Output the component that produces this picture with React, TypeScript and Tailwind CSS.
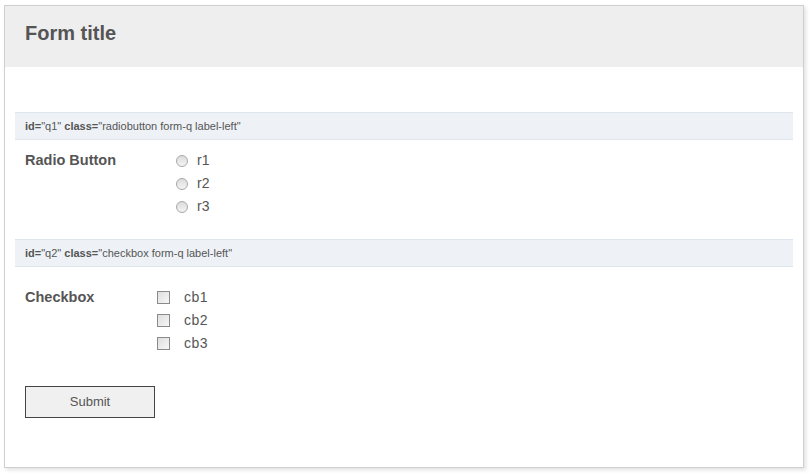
import React from "react";

function Radio() {
  return (
    <span className="w-[12px] h-[12px] rounded-full border border-[#a8a8a8] bg-gradient-to-b from-[#dcdcdc] to-[#f4f4f4] shrink-0" />
  );
}

function Box() {
  return (
    <span className="w-[13px] h-[13px] border border-[#8a8a8a] bg-gradient-to-br from-[#dedede] to-[#f7f7f7] shrink-0" />
  );
}

function Bar({ id, cls }: { id: string; cls: string }) {
  return (
    <div className="h-[28px] border-y border-[#dde6ee] bg-[#eef2f6] px-[10px] flex items-center text-[11px] text-[#555]">
      <b>id=</b>"{id}"&nbsp;<b>class=</b>"{cls}"
    </div>
  );
}

export default function App() {
  return (
    <div
      className="w-[809px] h-[474px] bg-white pt-[5px] pl-[4px]"
      style={{ fontFamily: '"Liberation Sans", Arial, sans-serif' }}
    >
      <div className="w-[800px] h-[463px] border border-[#cfcfcf] shadow-[2px_2px_4px_rgba(0,0,0,0.12)] bg-white">
        <div className="h-[61px] bg-[#eeeeee] px-[20px] pt-[16px]">
          <h1 className="text-[20px] font-bold text-[#555] leading-[23px]">Form title</h1>
        </div>

        <div className="px-[10px] pt-[45px]">
          <Bar id="q1" cls="radiobutton form-q label-left" />
          <div className="flex px-[10px] pt-[12px] pb-[24px] text-[#555]">
            <div className="w-[151px] font-bold leading-[17px] text-[14.5px]">Radio Button</div>
            <div className="flex flex-col gap-[6px]">
              {["r1", "r2", "r3"].map((r) => (
                <label key={r} className="flex items-center gap-[9px] h-[17px] text-[14px]">
                  <Radio />
                  {r}
                </label>
              ))}
            </div>
          </div>

          <Bar id="q2" cls="checkbox form-q label-left" />
          <div className="flex px-[10px] pt-[22px] text-[#555]">
            <div className="w-[132px] font-bold leading-[17px] text-[14.5px]">Checkbox</div>
            <div className="flex flex-col gap-[6px]">
              {["cb1", "cb2", "cb3"].map((c) => (
                <label key={c} className="flex items-center gap-[14px] h-[17px] text-[14px] tracking-[0.5px]">
                  <Box />
                  {c}
                </label>
              ))}
            </div>
          </div>

          <div className="px-[10px] pt-[34px]">
            <button className="w-[130px] h-[32px] border border-[#444] bg-[#f0f0f0] text-[13px] text-[#555]">
              Submit
            </button>
          </div>
        </div>
      </div>
    </div>
  );
}
